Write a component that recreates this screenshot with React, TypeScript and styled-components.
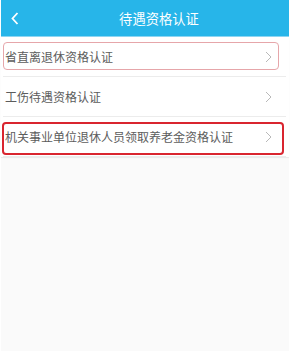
import React from "react";
import styled, { createGlobalStyle, css } from "styled-components";

const Global = createGlobalStyle`
  html, body { margin: 0; padding: 0; background: #ffffff; }
  body { font-family: "Noto Sans CJK SC", "Noto Sans", sans-serif; }
`;

const Frame = styled.div`
  width: 288px;
  height: 351px;
  margin-left: 1px;
  background: #fafafa;
  display: flex;
  flex-direction: column;
`;

const Header = styled.div`
  height: 36px;
  background: #27b5e9;
  border-bottom: 1px solid #8dd5f2;
  display: flex;
  align-items: center;
`;

const Back = styled.div`
  width: 30px;
  padding-left: 10px;
  display: flex;
  align-items: center;
`;

const Title = styled.div`
  flex: 1;
  text-align: center;
  padding-right: 12px;
  color: #ffffff;
  font-size: 13.3px;
  line-height: 35px;
`;

const List = styled.div`
  background: #ffffff;
  padding: 0 3px 0 2px;
  box-shadow: 0 1px 1px rgba(0, 0, 0, 0.06);
`;

type Mark = "soft" | "strong" | undefined;

const Row = styled.div<{ $mark?: Mark }>`
  height: 40px;
  display: flex;
  align-items: center;
  justify-content: space-between;
  border-bottom: 1px solid #ececec;
  position: relative;
  padding: 0 14px 0 2px;
  box-sizing: border-box;
  ${(p) =>
    p.$mark === "soft" &&
    css`
      &::after {
        content: "";
        position: absolute;
        left: 0;
        right: 7px;
        top: 5px;
        bottom: 6px;
        border: 1px solid #e6a6aa;
        border-radius: 4px;
        pointer-events: none;
      }
    `}
  ${(p) =>
    p.$mark === "strong" &&
    css`
      &::after {
        content: "";
        position: absolute;
        left: -1px;
        right: 2px;
        top: 5px;
        bottom: 1px;
        border: 2px solid #d9252f;
        border-radius: 4px;
        pointer-events: none;
      }
    `}
`;

const Label = styled.span`
  color: #5c5c5c;
  font-size: 12px;
  line-height: 1;
`;

const Chevron = () => (
  <svg width="7" height="12" viewBox="0 0 7 12">
    <path d="M1 1 L6 6 L1 11" fill="none" stroke="#b9b9b9" strokeWidth="1" />
  </svg>
);

const BackIcon = () => (
  <svg width="8" height="13" viewBox="0 0 8 13">
    <path d="M6.5 1 L1.5 6.5 L6.5 12" fill="none" stroke="#ffffff" strokeWidth="1.8" />
  </svg>
);

const items: { label: string; mark?: Mark }[] = [
  { label: "省直离退休资格认证", mark: "soft" },
  { label: "工伤待遇资格认证" },
  { label: "机关事业单位退休人员领取养老金资格认证", mark: "strong" },
];

export default function App() {
  return (
    <>
      <Global />
      <Frame>
        <Header>
          <Back>
            <BackIcon />
          </Back>
          <Title>待遇资格认证</Title>
        </Header>
        <List>
          {items.map((it) => (
            <Row key={it.label} $mark={it.mark}>
              <Label>{it.label}</Label>
              <Chevron />
            </Row>
          ))}
        </List>
      </Frame>
    </>
  );
}
